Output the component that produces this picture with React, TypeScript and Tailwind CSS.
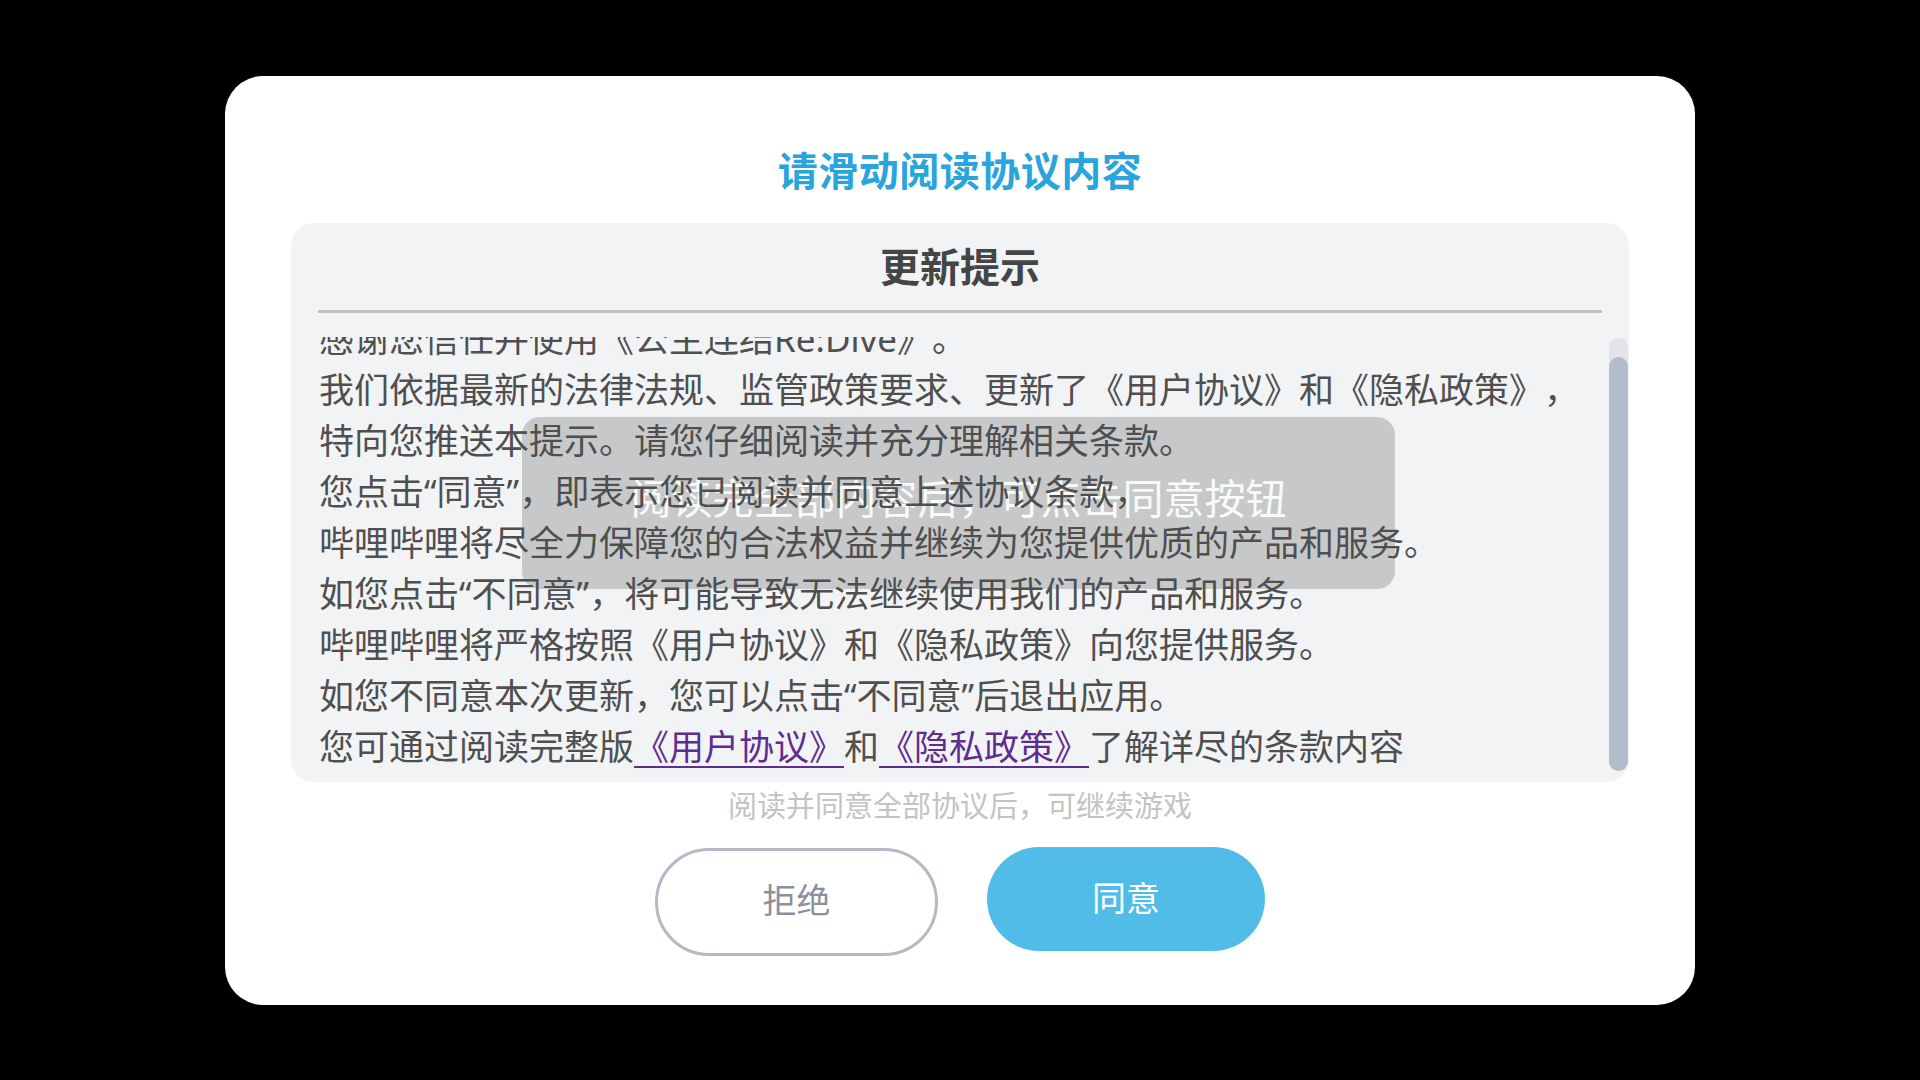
import React from 'react';

const lines: React.ReactNode[] = [
  '感谢您信任并使用《公主连结Re:Dive》。',
  '我们依据最新的法律法规、监管政策要求、更新了《用户协议》和《隐私政策》，',
  '特向您推送本提示。请您仔细阅读并充分理解相关条款。',
  '您点击“同意”，即表示您已阅读并同意上述协议条款，',
  '哔哩哔哩将尽全力保障您的合法权益并继续为您提供优质的产品和服务。',
  '如您点击“不同意”，将可能导致无法继续使用我们的产品和服务。',
  '哔哩哔哩将严格按照《用户协议》和《隐私政策》向您提供服务。',
  '如您不同意本次更新，您可以点击“不同意”后退出应用。',
];

export default function App() {
  return (
    <div className="w-full h-screen bg-black flex items-center justify-center font-['Noto_Sans','Noto_Sans_CJK_SC',sans-serif] [text-spacing-trim:space-all]">
      <div className="w-[1470px] h-[929px] bg-white rounded-[38px] flex flex-col items-center pt-[71px]">
        <h1 className="text-[40px] leading-[48px] font-bold text-[#2aa4dc] tracking-[0.5px]">请滑动阅读协议内容</h1>

        <div className="relative mt-[28px] w-[1338px] h-[559px] bg-[#f2f3f5] rounded-[22px] flex flex-col pt-[20px]">
          <h2 className="text-center text-[40px] leading-[48px] font-bold text-[#454545]">更新提示</h2>
          <div className="mx-[27px] mt-[19px] h-[3px] bg-[#c0c1c3]" />

          <div className="relative mt-[24px] h-[445px] overflow-hidden">
            {/* toast sits beneath the text layer */}
            <div className="absolute left-[231px] top-[80px] w-[873px] h-[172px] rounded-[18px] bg-[rgba(120,120,124,0.35)] flex items-center justify-center pb-[10px]">
              <span className="text-[41px] leading-[48px] text-white/90">阅读完全部内容后，可点击同意按钮</span>
            </div>

            <div className="relative -mt-[24px] pl-[28px] text-[35px] leading-[51px] text-[#4f4f4f] whitespace-nowrap">
              {lines.map((l, i) => (
                <p key={i}>{l}</p>
              ))}
              <p>
                您可通过阅读完整版
                <a href="#" className="text-[#5e2d91] underline underline-offset-[6px] decoration-[2px]">《用户协议》</a>
                和
                <a href="#" className="text-[#5e2d91] underline underline-offset-[6px] decoration-[2px]">《隐私政策》</a>
                了解详尽的条款内容
              </p>
            </div>
          </div>

          {/* scrollbar */}
          <div className="absolute right-[1px] top-[115px] w-[19px] h-[433px] rounded-full bg-[#e2e4e9]">
            <div className="mt-[19px] h-[414px] rounded-full bg-[#b3bccb]" />
          </div>
        </div>

        <p className="mt-[6px] text-[29px] leading-[36px] text-[#c3c3c3]">阅读并同意全部协议后，可继续游戏</p>

        <div className="mt-[24px] flex items-start justify-center gap-[49px]">
          <button className="w-[283px] h-[108px] rounded-full border-[3px] border-[#b3bac6] bg-white text-[34px] text-[#8a909c] pb-[2px]">
            拒绝
          </button>
          <button className="w-[278px] h-[104px] -mt-[1px] rounded-full bg-[#52bce8] text-[34px] text-white">
            同意
          </button>
        </div>
      </div>
    </div>
  );
}
